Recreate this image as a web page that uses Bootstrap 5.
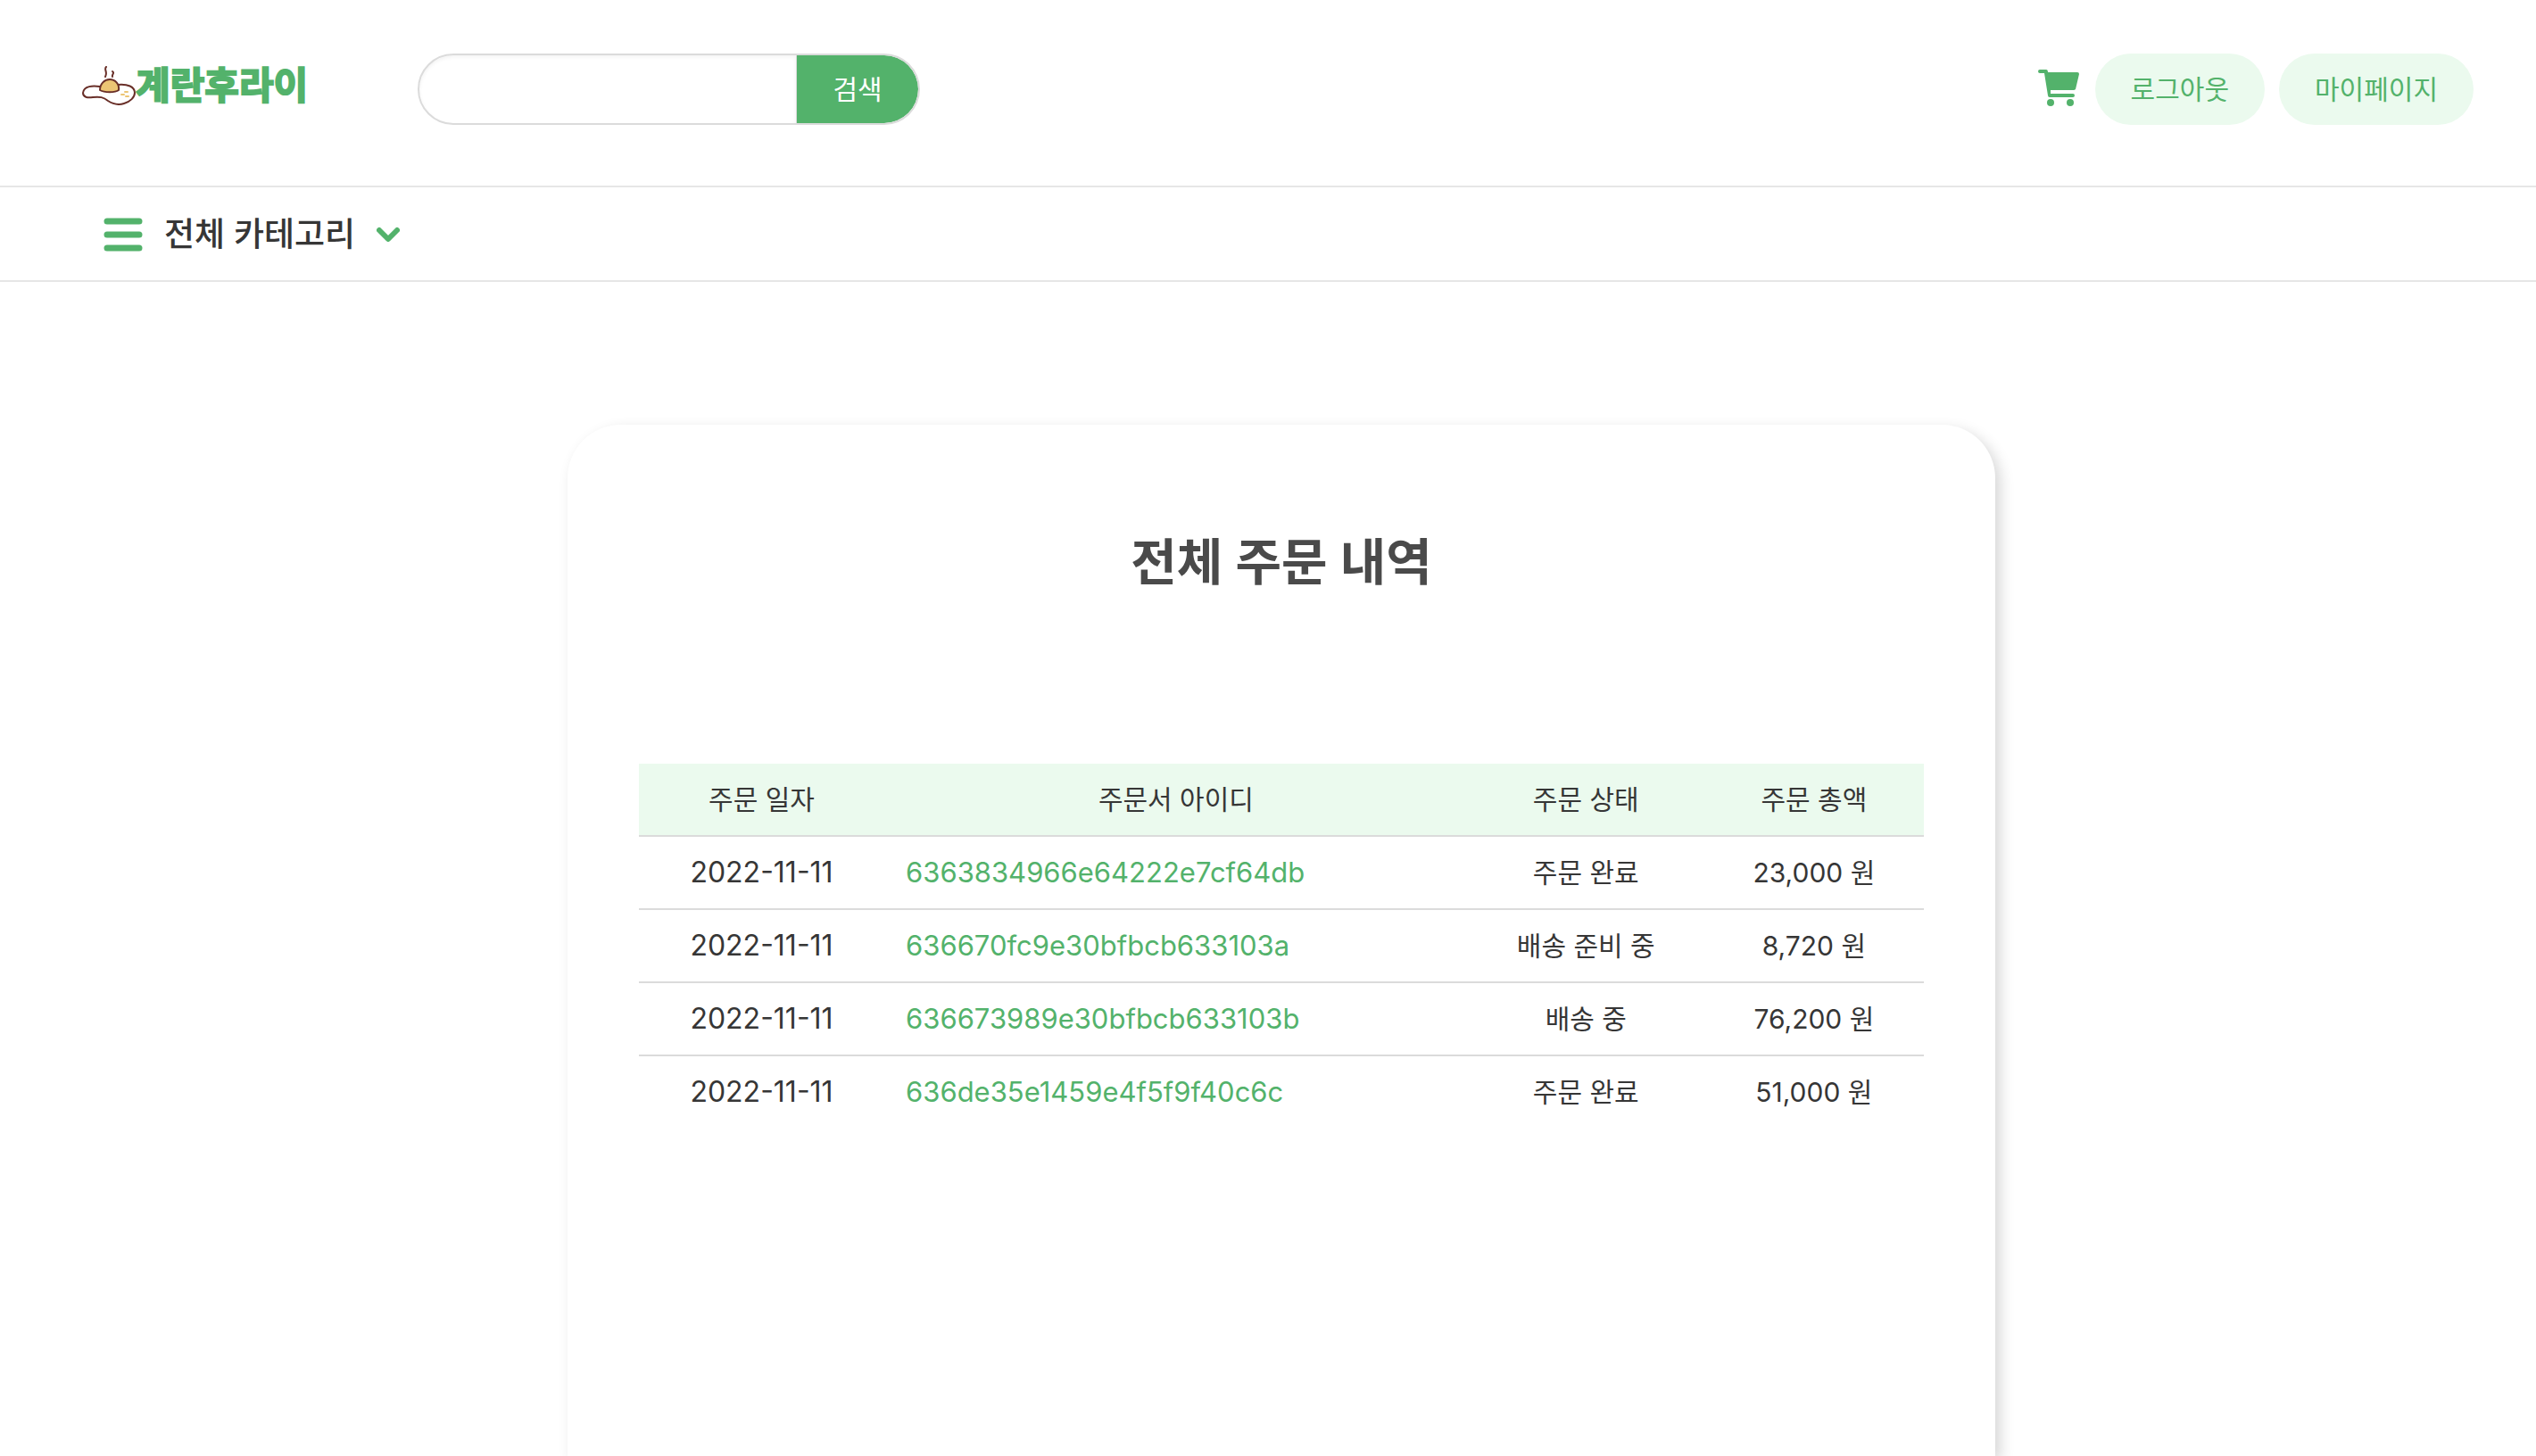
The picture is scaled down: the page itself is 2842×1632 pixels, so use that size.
<!DOCTYPE html>
<html lang="ko">
<head>
<meta charset="utf-8">
<meta name="viewport" content="width=device-width, initial-scale=1">
<title>전체 주문 내역 - 계란후라이</title>
<link href="https://cdn.jsdelivr.net/npm/bootstrap@5.3.0/dist/css/bootstrap.min.css" rel="stylesheet">
<style>
  :root { --brand: #53b26b; --tint: #ebfaee; --ink: #363636; --rule: #dbdbdb; }
  body { font-family: Inter, "Noto Sans CJK KR", sans-serif; font-size: 30px; line-height: 48px; color: var(--ink); }
  .site-header { padding: 60px 70px 68px 92px; border-bottom: 2px solid #e6e6e6; }
  .brand-link { width: 256px; padding-bottom: 8px; color: var(--brand); font-size: 42px; font-weight: 700; line-height: 48px; -webkit-text-stroke: 2px var(--brand); }
  .search-group { width: 563px; margin-left: 120px; }
  .search-group .form-control { height: 80px; border: 2px solid var(--rule); border-radius: 40px 0 0 40px; font-size: 30px; box-shadow: inset 0 2px 4px rgba(10,10,10,.05); padding: 0 32px; }
  .search-group .btn { height: 80px; width: 138px; border: 2px solid var(--rule); border-left: 0; border-radius: 0 40px 40px 0; background: var(--brand) padding-box; color: #fff; font-size: 30px; line-height: 48px; }
  .pill-btn, .pill-btn:hover { height: 80px; padding: 16px 40px; border: 0; border-radius: 40px; background: var(--tint); color: var(--brand); font-size: 30px; line-height: 48px; }
  .header-actions { gap: 16px; }
  .category-bar { height: 106px; padding: 2px 116px 0; border-bottom: 2px solid #e6e6e6; }
  .category-btn { gap: 24px; font-size: 37px; font-weight: 500; color: var(--ink); }
  main { padding: 160px 0 0 30px; }
  .order-card { width: 1600px; max-width: 100%; border-radius: 60px 60px 0 0; padding: 112px 80px 0; box-shadow: 6px 6px 16px rgba(0,0,0,.16); }
  .order-card h1 { font-size: 56px; font-weight: 600; line-height: 84px; color: #4a4a4a; margin-bottom: 184px; }
  .order-table { --bs-table-color: var(--ink); table-layout: fixed; border-collapse: separate; border-spacing: 0; }
  .order-table th, .order-table td { padding: 16px 24px; font-weight: 400; border-color: var(--rule); border-bottom-width: 2px; text-align: center; white-space: nowrap; }
  .order-table th { background: var(--tint); }
  .order-table tbody tr:last-child td { border-bottom: 0; }
  .order-table .order-date { font-size: 32px; }
  .order-table .order-id { font-size: 31px; text-align: left; }
  .order-id a { color: var(--brand); text-decoration: none; }
</style>
</head>
<body class="d-flex flex-column min-vh-100 bg-white">
<header class="site-header d-flex align-items-center">
  <a href="#" class="brand-link d-flex align-items-center text-decoration-none text-nowrap">
    <svg width="60" height="44" viewBox="0 0 60 44" fill="none" stroke="#692f28" stroke-width="2" stroke-linecap="round" stroke-linejoin="round" aria-hidden="true">
      <path d="M20 23C12 22 2 22 1 30c0 5 5 6 11 5 8-1 12 0 17 4 6 4 12 5 18 3 7-2 12-7 12-12 0-7-8-10-19-9" fill="#fff"/>
      <path d="M20 27c0-7 5-12 11-12s11 5 10 12c-4 3-16 3-21 0Z" fill="#ecc574"/>
      <path d="M27 1c-3 3 2 5-1 11M34 6c3 2-1 3 0 6"/>
      <path d="M44 32h3M49 34h3M48 29h3" stroke="#ecc574"/>
    </svg>
    <span>계란후라이</span>
  </a>
  <form class="search-group input-group flex-nowrap" role="search">
    <input type="search" class="form-control" aria-label="상품 검색">
    <button type="button" class="btn">검색</button>
  </form>
  <div class="header-actions d-flex align-items-center ms-auto">
    <a href="#" aria-label="장바구니" class="d-flex">
      <svg width="48" height="44" viewBox="0 0 48 44" fill="#53b26b" aria-hidden="true">
        <path d="M2 0h7q2 0 2 3h33q2 0 2 2l-4 17q-1 1-2 1H14v4h25q2 0 2 2t-2 2H13q-2 0-2-2L7 4H2Q0 4 0 2t2-2Z"/>
        <circle cx="14" cy="37" r="4"/><circle cx="36" cy="37" r="4"/>
      </svg>
    </a>
    <button type="button" class="btn pill-btn">로그아웃</button>
    <a href="#" class="btn pill-btn">마이페이지</a>
  </div>
</header>
<nav class="category-bar d-flex align-items-center" aria-label="카테고리">
  <button type="button" class="category-btn btn p-0 border-0 d-flex align-items-center">
    <svg width="44" height="38" viewBox="0 0 44 38" stroke="#53b26b" stroke-width="7" stroke-linecap="round" aria-hidden="true"><path d="M4 4h36M4 19h36M4 34h36"/></svg>
    <span>전체 카테고리</span>
    <svg width="26" height="18" viewBox="0 0 26 18" fill="none" stroke="#53b26b" stroke-width="6" stroke-linecap="round" stroke-linejoin="round" aria-hidden="true"><path d="M3 4l10 10L23 4"/></svg>
  </button>
</nav>
<main class="flex-fill d-flex justify-content-center">
  <section class="order-card">
    <h1 class="text-center">전체 주문 내역</h1>
    <table class="order-table table mb-0">
      <colgroup><col style="width:19.1%"><col style="width:45.4%"><col style="width:18.4%"><col style="width:17.1%"></colgroup>
      <thead>
        <tr><th scope="col">주문 일자</th><th scope="col">주문서 아이디</th><th scope="col">주문 상태</th><th scope="col">주문 총액</th></tr>
      </thead>
      <tbody>
        <tr><td class="order-date">2022-11-11</td><td class="order-id"><a href="#">6363834966e64222e7cf64db</a></td><td>주문 완료</td><td>23,000 원</td></tr>
        <tr><td class="order-date">2022-11-11</td><td class="order-id"><a href="#">636670fc9e30bfbcb633103a</a></td><td>배송 준비 중</td><td>8,720 원</td></tr>
        <tr><td class="order-date">2022-11-11</td><td class="order-id"><a href="#">636673989e30bfbcb633103b</a></td><td>배송 중</td><td>76,200 원</td></tr>
        <tr><td class="order-date">2022-11-11</td><td class="order-id"><a href="#">636de35e1459e4f5f9f40c6c</a></td><td>주문 완료</td><td>51,000 원</td></tr>
      </tbody>
    </table>
  </section>
</main>
<script src="https://cdn.jsdelivr.net/npm/bootstrap@5.3.0/dist/js/bootstrap.bundle.min.js"></script>
</body>
</html>
